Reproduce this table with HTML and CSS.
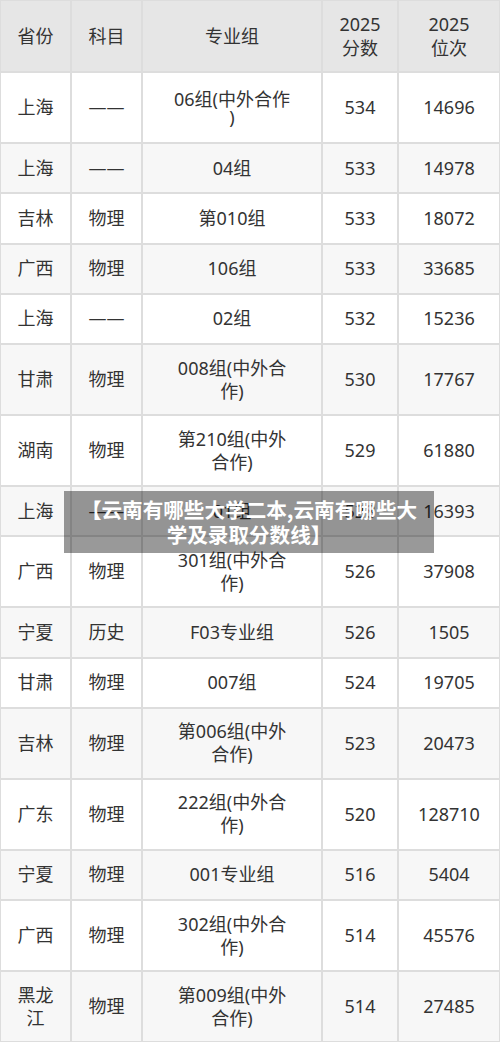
FILE: index.html
```html
<!DOCTYPE html>
<html lang="zh-CN">
<head>
<meta charset="utf-8">
<title>云南有哪些大学二本</title>
<link rel="stylesheet" href="styles.css">
</head>
<body>
<div class="page">
  <table class="scores">
    <colgroup>
      <col class="c-prov"><col class="c-subj"><col class="c-group"><col class="c-score"><col class="c-rank">
    </colgroup>
    <thead>
      <tr class="head">
        <th>省份</th><th>科目</th><th class="grp">专业组</th><th>2025<br>分数</th><th>2025<br>位次</th>
      </tr>
    </thead>
    <tbody>
      <tr class="dbl"><td>上海</td><td>——</td><td class="grp tight">06组(中外合作<br>)</td><td>534</td><td>14696</td></tr>
      <tr class="sgl"><td>上海</td><td>——</td><td class="grp">04组</td><td>533</td><td>14978</td></tr>
      <tr class="sgl"><td>吉林</td><td>物理</td><td class="grp">第010组</td><td>533</td><td>18072</td></tr>
      <tr class="sgl"><td>广西</td><td>物理</td><td class="grp">106组</td><td>533</td><td>33685</td></tr>
      <tr class="sgl"><td>上海</td><td>——</td><td class="grp">02组</td><td>532</td><td>15236</td></tr>
      <tr class="dbl"><td>甘肃</td><td>物理</td><td class="grp">008组(中外合<br>作)</td><td>530</td><td>17767</td></tr>
      <tr class="dbl"><td>湖南</td><td>物理</td><td class="grp">第210组(中外<br>合作)</td><td>529</td><td>61880</td></tr>
      <tr class="sgl"><td>上海</td><td>——</td><td class="grp">01组</td><td>528</td><td>16393</td></tr>
      <tr class="dbl"><td>广西</td><td>物理</td><td class="grp">301组(中外合<br>作)</td><td>526</td><td>37908</td></tr>
      <tr class="sgl"><td>宁夏</td><td>历史</td><td class="grp">F03专业组</td><td>526</td><td>1505</td></tr>
      <tr class="sgl"><td>甘肃</td><td>物理</td><td class="grp">007组</td><td>524</td><td>19705</td></tr>
      <tr class="dbl"><td>吉林</td><td>物理</td><td class="grp">第006组(中外<br>合作)</td><td>523</td><td>20473</td></tr>
      <tr class="dbl"><td>广东</td><td>物理</td><td class="grp">222组(中外合<br>作)</td><td>520</td><td>128710</td></tr>
      <tr class="sgl"><td>宁夏</td><td>物理</td><td class="grp">001专业组</td><td>516</td><td>5404</td></tr>
      <tr class="dbl"><td>广西</td><td>物理</td><td class="grp">302组(中外合<br>作)</td><td>514</td><td>45576</td></tr>
      <tr class="dbl"><td>黑龙<br>江</td><td>物理</td><td class="grp">第009组(中外<br>合作)</td><td>514</td><td>27485</td></tr>
    </tbody>
  </table>
  <div class="caption">【云南有哪些大学二本,云南有哪些大学及录取分数线】</div>
</div>
</body>
</html>
```
FILE: styles.css
```css
html, body {
  margin: 0;
  padding: 0;
  background: #ffffff;
}

.page {
  position: relative;
  width: 500px;
  font-family: "Noto Sans", "Noto Sans CJK SC", sans-serif;
  color: #333333;
}

.scores {
  width: 500px;
  table-layout: fixed;
  border-collapse: separate;
  border-spacing: 0;
  font-size: 18px;
}

.c-prov { width: 71px; }
.c-subj { width: 71px; }
.c-group { width: 180px; }
.c-score { width: 76px; }
.c-rank { width: 102px; }

.scores th,
.scores td {
  box-sizing: border-box;
  border: 1px solid #dddddd;
  padding: 0 6px;
  text-align: center;
  vertical-align: middle;
  font-weight: normal;
  line-height: 23px;
}

.scores th {
  background: #e6e6e6;
  height: 72px;
  line-height: 24px;
}

.scores tbody tr:nth-child(even) td {
  background: #f7f7f7;
}

.scores tbody tr:nth-child(odd) td {
  background: #ffffff;
}

.scores .dbl td { height: 71px; }
.scores .sgl td { height: 50.25px; }

.scores .tight { line-height: 18px; }

.caption {
  position: absolute;
  left: 64px;
  top: 491px;
  width: 370px;
  height: 62px;
  box-sizing: border-box;
  padding: 6px 10px;
  background: rgba(0, 0, 0, 0.4);
  color: #ffffff;
  font-family: "Noto Sans CJK SC", "Noto Sans", sans-serif;
  font-weight: bold;
  font-size: 20.6px;
  line-height: 25px;
  text-align: center;
}
```
